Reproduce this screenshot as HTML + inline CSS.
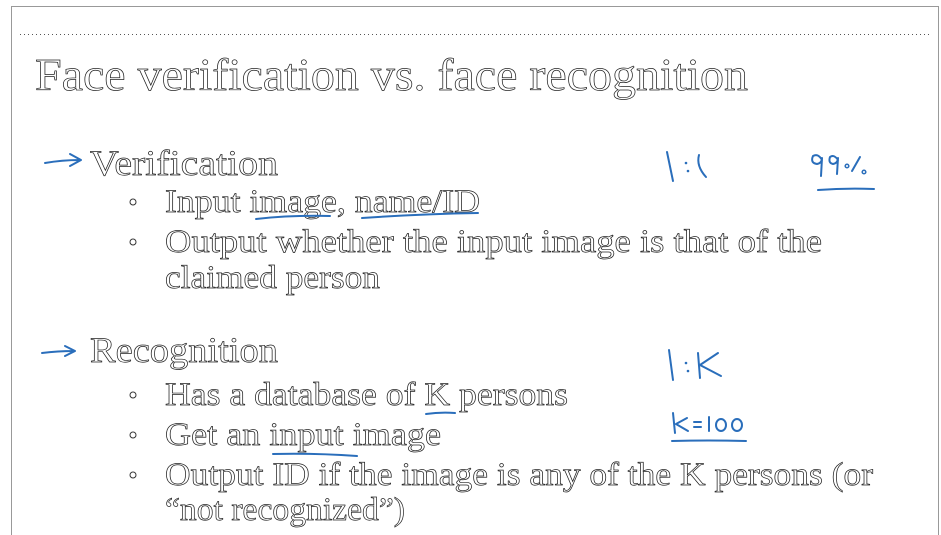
<!DOCTYPE html>
<html><head><meta charset="utf-8"><style>
html,body{margin:0;padding:0;background:#fff;width:941px;height:535px;overflow:hidden}
svg{display:block}
.t{font-family:"Liberation Serif","DejaVu Serif",serif;fill:#fff;stroke:#222;stroke-width:0.7px}
.h{fill:none;stroke:#2a6ebb;stroke-width:2;stroke-linecap:round;stroke-linejoin:round}
</style></head><body>
<svg width="941" height="535" viewBox="0 0 941 535" xmlns="http://www.w3.org/2000/svg">
<rect x="11.5" y="6.5" width="927" height="540" fill="none" stroke="#999" stroke-width="1"/>
<line x1="20" y1="34.5" x2="930" y2="34.5" stroke="#555" stroke-width="1" stroke-dasharray="1 3"/>
<text class="t" x="35" y="90" font-size="45" textLength="713" lengthAdjust="spacingAndGlyphs">Face verification vs. face recognition</text>
<text class="t" x="90" y="175" font-size="36" textLength="188" lengthAdjust="spacingAndGlyphs">Verification</text>
<circle cx="133" cy="202" r="3" fill="none" stroke="#333" stroke-width="1"/>
<text class="t" x="165" y="212" font-size="33" textLength="315" lengthAdjust="spacingAndGlyphs">Input image, name/ID</text>
<circle cx="133" cy="242" r="3" fill="none" stroke="#333" stroke-width="1"/>
<text class="t" x="165" y="252" font-size="33" textLength="657" lengthAdjust="spacingAndGlyphs">Output whether the input image is that of the</text>
<text class="t" x="165" y="288" font-size="33" textLength="215" lengthAdjust="spacingAndGlyphs">claimed person</text>
<text class="t" x="90" y="362" font-size="36" textLength="188" lengthAdjust="spacingAndGlyphs">Recognition</text>
<circle cx="133" cy="395" r="3" fill="none" stroke="#333" stroke-width="1"/>
<text class="t" x="165" y="405" font-size="33" textLength="403" lengthAdjust="spacingAndGlyphs">Has a database of K persons</text>
<circle cx="133" cy="435" r="3" fill="none" stroke="#333" stroke-width="1"/>
<text class="t" x="165" y="445" font-size="33" textLength="276" lengthAdjust="spacingAndGlyphs">Get an input image</text>
<circle cx="133" cy="475" r="3" fill="none" stroke="#333" stroke-width="1"/>
<text class="t" x="165" y="485" font-size="33" textLength="708" lengthAdjust="spacingAndGlyphs">Output ID if the image is any of the K persons (or</text>
<text class="t" x="165" y="520" font-size="33" textLength="240" lengthAdjust="spacingAndGlyphs">“not recognized”)</text>
<path class="h" d="M45 163 Q62 160 80 160 M70 154 L81 160 L70 166"/>
<path class="h" d="M42 353 Q58 351 74 351 M65 346 L75 351 L65 356"/>
<path class="h" d="M256 219 Q292 215 330 216"/>
<path class="h" d="M362 218 Q420 214 478 213"/>
<path class="h" d="M426 414 Q440 412 455 413"/>
<path class="h" d="M273 454 Q315 453 357 456"/>
<path class="h" d="M667 152 L673 181"/>
<circle cx="686" cy="163" r="1.3" fill="#2a6ebb"/><circle cx="688" cy="171" r="1.3" fill="#2a6ebb"/>
<path class="h" d="M699 155 Q696 166 706 177"/>
<path class="h" d="M822 160 Q818 153 813 156 Q810 163 817 164 Q822 163 822 158 L821 176"/>
<path class="h" d="M838 160 Q834 154 830 157 Q828 163 833 164 Q838 163 838 158 L837 174"/>
<circle cx="847" cy="166" r="1.8" fill="none" stroke="#2a6ebb" stroke-width="1.5"/>
<path class="h" d="M852 171 L860 157"/>
<circle cx="864" cy="172" r="1.8" fill="none" stroke="#2a6ebb" stroke-width="1.5"/>
<path class="h" d="M818 190 Q845 188 874 189"/>
<path class="h" d="M669 350 L673 380"/>
<circle cx="686" cy="363" r="1.3" fill="#2a6ebb"/><circle cx="688" cy="371" r="1.3" fill="#2a6ebb"/>
<path class="h" d="M698 353 L700 378 M718 353 L700 365 L721 376"/>
<path class="h" d="M673 413 L675 433 M687 418 L676 424 L688 431"/>
<path class="h" d="M694 422 L701 422 M694 427 L701 427"/>
<path class="h" d="M709 417 L709 431"/>
<ellipse cx="721" cy="425" rx="5" ry="6" fill="none" stroke="#2a6ebb" stroke-width="2"/>
<ellipse cx="737" cy="425" rx="5" ry="6" fill="none" stroke="#2a6ebb" stroke-width="2"/>
<path class="h" d="M672 441 Q708 440 746 441"/>
</svg>
</body></html>
